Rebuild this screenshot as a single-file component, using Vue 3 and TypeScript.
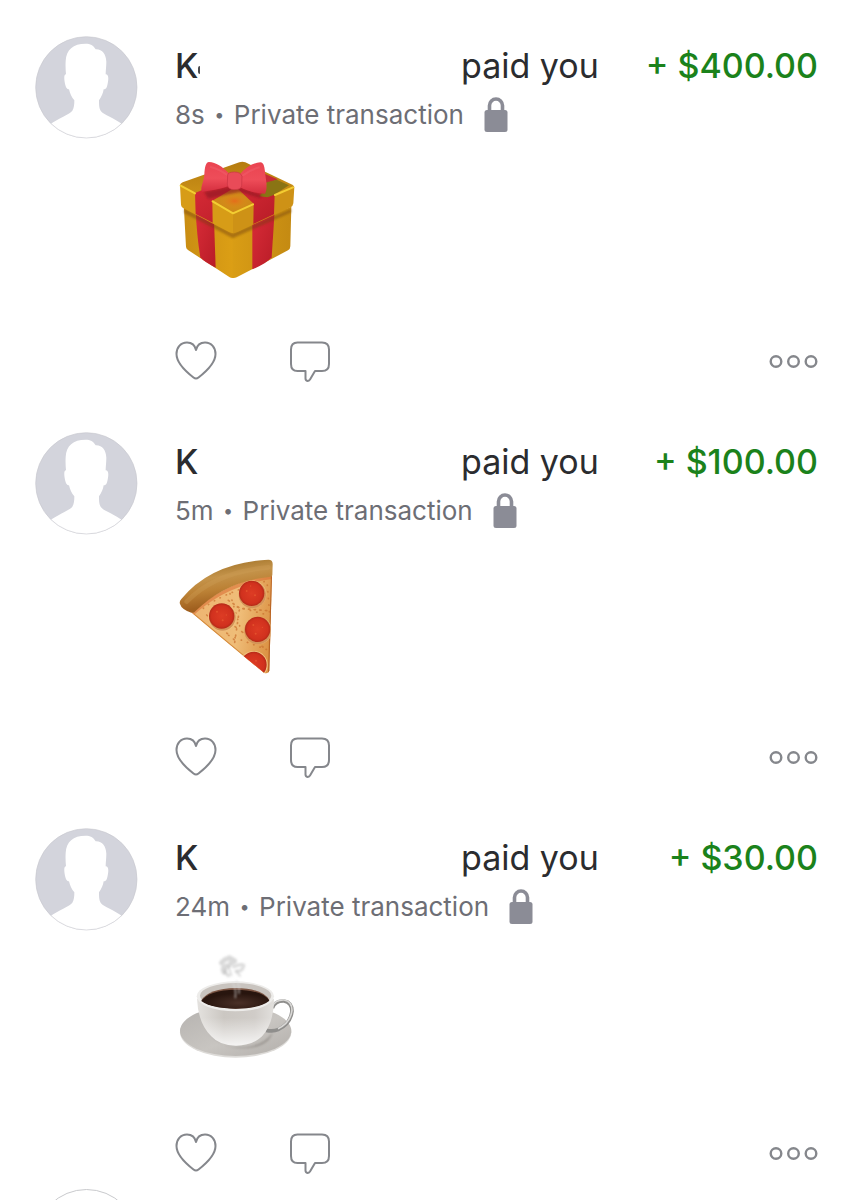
<script setup lang="ts">
type Art = 'gift' | 'pizza' | 'coffee'

interface Payment {
  id: number
  name: string
  masked: boolean
  age: string
  amount: string
  art: Art
}

const payments: Payment[] = [
  { id: 1, name: 'K', masked: true, age: '8s', amount: '+ $400.00', art: 'gift' },
  { id: 2, name: 'K', masked: false, age: '5m', amount: '+ $100.00', art: 'pizza' },
  { id: 3, name: 'K', masked: false, age: '24m', amount: '+ $30.00', art: 'coffee' },
]
</script>

<template>
  <main class="feed">
    <article v-for="p in payments" :key="p.id" class="payment">
      <svg class="avatar" viewBox="46 48 309 309" role="img" aria-label="Profile picture">
        <defs>
          <clipPath :id="`face-${p.id}`"><circle cx="200" cy="202" r="152" /></clipPath>
        </defs>
        <circle cx="200" cy="202" r="152" fill="#d3d4dc" />
        <path
          :clip-path="`url(#face-${p.id})`"
          fill="#fff"
          d="M198 71c14 0 23 5 30 17 20-1 31 15 32 37 0 15-2 26-2 38 8 0 9 10 7 22-2 13-4 23-13 23-2 12-6 22-14 33 0 18 1 25 6 33 6 9 42 22 66 40v60H90v-60c24-18 62-32 68-42 5-8 6-18 6-31-9-10-13-21-16-33-8 0-11-10-13-22-2-13-2-22 4-23-1-12-2-24-1-40 2-34 22-52 60-52z"
        />
        <circle cx="200" cy="202" r="152" fill="none" stroke="#c6c7cd" stroke-width="3" stroke-opacity=".6" />
      </svg>

      <div class="content">
        <header class="title">
          <span class="payer"><strong class="name">{{ p.name }}</strong><i v-if="p.masked" class="mask-edge"></i></span>
          <span>paid you</span>
          <span class="amount">{{ p.amount }}</span>
        </header>

        <p class="meta">
          <span>{{ p.age }}</span>
          <span class="dot">•</span>
          <span>Private transaction</span>
          <svg class="lock" viewBox="0 0 24 36" aria-hidden="true">
            <path d="M5.500 16V8.500a6.500 6.500 0 0 1 13 0V16" fill="none" stroke="#8b8c96" stroke-width="3.600" />
            <rect x=".5" y="13" width="23" height="22" rx="2.500" fill="#8b8c96" />
          </svg>
        </p>

        <svg v-if="p.art === 'gift'" class="art" viewBox="45 21 360 378" role="img" aria-label="Gift">
          <defs>
            <linearGradient id="g-left" x1="0" x2="1"><stop offset="0" stop-color="#c98d13" /><stop offset="1" stop-color="#dc9f15" /></linearGradient>
            <linearGradient id="g-right" x1="0" x2="1"><stop offset="0" stop-color="#d99d15" /><stop offset="1" stop-color="#c48a12" /></linearGradient>
            <linearGradient id="g-top" x1="0" y1="0" x2="0" y2="1"><stop offset="0" stop-color="#b57c10" /><stop offset="1" stop-color="#d79c1b" /></linearGradient>
            <linearGradient id="g-red" x1="0" y1="0" x2="1" y2="1"><stop offset="0" stop-color="#d92c38" /><stop offset="1" stop-color="#b81c27" /></linearGradient>
            <linearGradient id="g-bow" x1="0" y1="0" x2="0" y2="1"><stop offset="0" stop-color="#ea4451" /><stop offset=".55" stop-color="#ee4d59" /><stop offset="1" stop-color="#d52f3f" /></linearGradient>
            <radialGradient id="g-glow"><stop offset="0" stop-color="#e56c1b" /><stop offset="1" stop-color="#dc941a" stop-opacity="0" /></radialGradient>
            <filter id="g-soft" x="-20%" y="-20%" width="140%" height="140%"><feGaussianBlur stdDeviation="3" /></filter>
          </defs>
          <path d="M71 160l148 75v149q-5 1-10-2L84 300q-6-4-6-10z" fill="url(#g-left)" />
          <path d="M218 235l176-65-3 119q0 8-7 12l-154 81q-6 3-12 2z" fill="url(#g-right)" />
          <path d="M107 182l55 28 5 143q-36-18-46-31-10-60-14-140z" fill="url(#g-red)" />
          <path d="M277 214l67-31-9 139q-14 18-58 36z" fill="url(#g-red)" />
          <path d="M72 176l85 43 61 31 67-28 109-45v10l-109 48-67 30-61-33-85-43z" fill="#6f3d08" opacity=".45" filter="url(#g-soft)" />
          <path d="M60 105q1-5 8-8L238 37q9-3 18 0l141 67q6 3 6 8L220 192z" fill="url(#g-top)" />
          <path d="M60 105l160 85v60q-7-1-13-4L69 174q-6-4-6-10z" fill="#d79c17" />
          <path d="M219 190l184-79-3 49q-1 8-8 12l-158 73q-8 4-15 5z" fill="#ce9216" />
          <path d="M105 129l110-46 68 34-126 36 1 65-51-26z" fill="url(#g-red)" />
          <path d="M202 110l91-18 51 41-2 60-62 29 1-60z" fill="url(#g-red)" />
          <path d="M157 152l60-35q9-4 18 1l46 43-62 30z" fill="#cf8919" />
          <ellipse cx="224" cy="153" rx="44" ry="24" fill="url(#g-glow)" />
          <path d="M299 65l54 23-32 13z" fill="#c72a37" />
          <path d="M297 139q22-22 23-42l30-8 37 17-44 28-20 8z" fill="#8a7414" />
          <path d="M62 107l43 23M158 154l61 36 60-27M345 135l54-23" fill="none" stroke="#f3cd32" stroke-width="6" stroke-linecap="round" stroke-linejoin="round" />
          <path d="M132 126l71-14 43 2 62 23-8 7-61-18-42 8-52 12z" fill="#8c1823" opacity=".6" filter="url(#g-soft)" />
          <path d="M206 69c-19-19-38-32-59-33-10 0-13 17-14 38-2 22-15 44-6 51 24-4 49-6 79-17z" fill="url(#g-bow)" />
          <path d="M241 71c17-19 38-33 60-34 11 0 13 16 15 37 3 24 7 43-1 57-25 0-50-7-76-20z" fill="url(#g-bow)" />
          <path d="M150 50q29 7 53 26M299 52q-29 7-52 25" fill="none" stroke="#f26570" stroke-width="6" opacity=".4" />
          <path d="M203 75q1-9 20-9t23 13l-1 28q-1 12-23 12-19 0-20-17z" fill="#e94b58" stroke="#c93442" stroke-width="2" />
        </svg>

        <svg v-else-if="p.art === 'pizza'" class="art" viewBox="45 24 360 378" role="img" aria-label="Pizza">
          <defs>
            <linearGradient id="z-crust" x1=".4" y1=".1" x2=".6" y2=".8"><stop offset="0" stop-color="#a97a30" /><stop offset=".3" stop-color="#c4934a" /><stop offset=".6" stop-color="#bc8236" /><stop offset="1" stop-color="#a0601f" /></linearGradient>
            <linearGradient id="z-cheese" x1="0" y1=".3" x2="1" y2=".5"><stop offset="0" stop-color="#eeb471" /><stop offset=".6" stop-color="#efbd78" /><stop offset="1" stop-color="#dc9345" /></linearGradient>
            <radialGradient id="z-pep"><stop offset="0" stop-color="#dd3c24" /><stop offset=".8" stop-color="#d1311e" /><stop offset="1" stop-color="#b52a17" /></radialGradient>
            <clipPath id="z-slice"><path d="M95 203Q202 108 336 88l-8 288q-3 12-15 8Q210 300 95 203z" /></clipPath>
          </defs>
          <path d="M95 203Q202 108 336 88l-8 288q-3 12-15 8Q210 300 95 203z" fill="url(#z-cheese)" />
          <g clip-path="url(#z-slice)">
            <path d="M94 207Q198 112 338 95" fill="none" stroke="#d86a30" stroke-width="14" opacity=".55" />
            <path d="M336 94l-9 290" stroke="#b86324" stroke-width="6" />
            <path d="M102 208l217 181" stroke="#d48a3c" stroke-width="4" />
            <g fill="none" stroke="#c9712f" stroke-width="5" stroke-linecap="round" stroke-dasharray="1 19" opacity=".7">
              <path d="M130 190Q185 145 320 108" /><path d="M140 210l100 90" stroke-dasharray="3 24" />
              <path d="M205 166l35 24 92 8" stroke-dasharray="4 13" /><path d="M232 186l95 25" />
              <path d="M206 271l120 45" /><path d="M225 245l95 69" stroke-dasharray="4 21" />
              <path d="M210 146l30 100" /><path d="M238 195l-15 105" stroke-dasharray="3 16" /><path d="M322 120l7 90" />
            </g>
            <g fill="#f1c583"><circle cx="187" cy="217" r="42" /><circle cx="277" cy="148" r="42" /><circle cx="295" cy="257" r="41" /><circle cx="281" cy="360" r="42" /></g>
            <g fill="#a84a18" opacity=".4"><circle cx="187" cy="217" r="40" /><circle cx="277" cy="149" r="41" /><circle cx="294" cy="257" r="41" /></g>
            <g fill="url(#z-pep)"><circle cx="185" cy="213" r="38" /><circle cx="275" cy="145" r="38" /><circle cx="293" cy="253" r="38" /><circle cx="281" cy="359" r="39" /></g>
            <g fill="#f06a38" opacity=".5"><circle cx="171" cy="200" r="3" /><circle cx="188" cy="226" r="3" /><circle cx="199" cy="210" r="2" /><circle cx="260" cy="138" r="3" /><circle cx="285" cy="151" r="3" /><circle cx="272" cy="123" r="2" /><circle cx="287" cy="266" r="3" /><circle cx="280" cy="240" r="3" /><circle cx="307" cy="247" r="2" /><circle cx="288" cy="347" r="3" /></g>
          </g>
          <path d="M60 177q-3-8 4-15Q153 53 325 44q14 0 13 15l-1 32q-2 5-9 5-130 12-222 103-5 6-12 4-29-9-34-26z" fill="url(#z-crust)" />
          <path d="M80 170Q165 82 325 67" fill="none" stroke="#cf9f55" stroke-width="14" stroke-linecap="round" opacity=".35" />
        </svg>

        <svg v-else class="art" viewBox="45 30 360 378" role="img" aria-label="Coffee">
          <defs>
            <linearGradient id="c-plate" x1="0" y1="0" x2="1" y2="1"><stop offset="0" stop-color="#b5b2af" /><stop offset=".55" stop-color="#c8c5c1" /><stop offset="1" stop-color="#b2aeaa" /></linearGradient>
            <linearGradient id="c-cup" x1="0" x2="1"><stop offset="0" stop-color="#e4e2df" /><stop offset=".35" stop-color="#cbc7c2" /><stop offset=".75" stop-color="#d0ccc8" /><stop offset="1" stop-color="#e2e0dd" /></linearGradient>
            <linearGradient id="c-shine" x1="0" y1="0" x2="0" y2="1"><stop offset=".4" stop-color="#fff" stop-opacity="0" /><stop offset="1" stop-color="#fff" stop-opacity=".8" /></linearGradient>
            <radialGradient id="c-drink" cx=".55" cy=".7"><stop offset="0" stop-color="#4a3027" /><stop offset="1" stop-color="#28150e" /></radialGradient>
            <filter id="c-soft" x="-20%" y="-20%" width="140%" height="140%"><feGaussianBlur stdDeviation="3" /></filter>
          </defs>
          <ellipse cx="227" cy="280" rx="167" ry="76" fill="#dddbd8" />
          <ellipse cx="227" cy="276" rx="167" ry="75" fill="url(#c-plate)" />
          <path d="M145 275q28 50 95 50 70 0 98-45-8 34-54 44-94 18-139-49z" fill="#77716c" opacity=".5" filter="url(#c-soft)" />
          <path d="M337 207q8-22 35-21 24 4 24 31-5 38-42 55-13 6-36 2" fill="none" stroke="#8f8e8c" stroke-width="11" />
          <path d="M337 203q8-21 35-20 24 4 24 31-5 38-42 55" fill="none" stroke="#d9d8d6" stroke-width="5" />
          <path d="M111 180q3 72 43 112 25 28 74 28t78-28q36-40 36-112z" fill="url(#c-cup)" />
          <path d="M111 180q3 72 43 112 25 28 74 28t78-28q36-40 36-112z" fill="url(#c-shine)" />
          <ellipse cx="226" cy="172" rx="116" ry="45" fill="#edecea" />
          <ellipse cx="227" cy="170" rx="107" ry="38" fill="#c9c4bf" />
          <path d="M124 184q23-36 103-37 80 1 101 36-29 25-101 26-74-2-103-25z" fill="#7c5543" />
          <path d="M124 186q23-33 103-34 80 1 101 33-29 24-101 24-74-1-103-23z" fill="url(#c-drink)" />
          <g fill="none" stroke="#aaa" stroke-linecap="round" filter="url(#c-soft)">
            <path d="M226 176q3-31-8-45M237 163q2-25-8-38" stroke="#ddd" stroke-width="4" opacity=".7" />
            <path d="M184 72q14-18 30-12t8 8-16 12q-24 2-14 20M208 56q19 9 4 17" stroke-width="14" opacity=".45" />
            <path d="M221 83q23-10 30-4-4 20-19 17M198 92q-7 8 8 18" stroke-width="10" opacity=".4" />
            <path d="M226 96l14 14M206 84l8 24" stroke-width="7" opacity=".35" />
          </g>
        </svg>

        <footer class="actions">
          <button type="button" class="icon-button" aria-label="Like">
            <svg class="heart" viewBox="0 0 42 42" aria-hidden="true">
              <path d="M21 10C20 5.500 16.500 2.500 12 2.500 5.500 2.500 1.500 7.500 1.500 14c0 9 8 16.500 17 23.500q2.500 2 5 0c9-7 17-14.500 17-23.500 0-6.500-4-11.500-10.500-11.500-4.500 0-8 3-9 7.500z" />
            </svg>
          </button>
          <button type="button" class="icon-button" aria-label="Comment">
            <svg class="bubble" viewBox="0 0 42 42" aria-hidden="true">
              <path d="M8.500 2.500h24.500q7 0 7 7v14.500q0 7-7 7h-7l-5 8.500q-1 1.500-2.500 1.500-2-.5-2-2.500v-7.500H8.500q-6.500 0-6.500-7v-14.500q0-7 6.500-7z" />
            </svg>
          </button>
          <button type="button" class="icon-button more" aria-label="More options">
            <svg class="dots" viewBox="0 0 50 42" aria-hidden="true">
              <circle cx="8" cy="21.500" r="5.300" /><circle cx="25.500" cy="21.500" r="5.300" /><circle cx="43" cy="21.500" r="5.300" />
            </svg>
          </button>
        </footer>
      </div>
    </article>
    <div class="next-avatar"></div>
  </main>
</template>

<style>
body {
  margin: 0;
  background: #fff;
}
</style>

<style scoped>
.feed {
  box-sizing: border-box;
  height: 100vh;
  overflow: hidden;
  padding: 36px 35px 0;
  background: #fff;
  color: #2b2c2f;
  font-family: Inter, "Liberation Sans", sans-serif;
}
.payment {
  display: grid;
  grid-template-columns: 103px 1fr;
  column-gap: 37px;
  padding-bottom: 50px;
}
.payment:nth-child(3) {
  padding-bottom: 15px;
}
.avatar {
  display: block;
  width: 103px;
  height: 103px;
}
.content {
  padding-top: 8px;
  min-width: 0;
}
.title {
  display: grid;
  grid-template-columns: 286px 1fr auto;
  font-size: 34px;
  line-height: 44px;
  white-space: nowrap;
}
.payer {
  display: flex;
  align-items: center;
}
.name {
  font-weight: 500;
}
.mask-edge {
  width: 2px;
  height: 8px;
  margin-top: 8px;
  border-radius: 2px 0 0 2px;
  background: #4a4b4e;
}
.amount {
  color: #1b821b;
  font-weight: 500;
}
.meta {
  display: flex;
  align-items: center;
  margin: 9px 0 24px;
  font-size: 26px;
  line-height: 36px;
  color: #6d6e75;
  white-space: nowrap;
}
.dot {
  width: 29px;
  font-size: 18px;
  text-align: center;
}
.lock {
  width: 24px;
  height: 36px;
  margin-left: 20px;
}
.art {
  display: block;
  width: 120px;
  height: 126px;
}
.actions {
  display: flex;
  gap: 72px;
  margin-top: 57px;
}
.icon-button {
  display: block;
  padding: 0;
  border: 0;
  background: none;
  line-height: 0;
  cursor: pointer;
}
.icon-button svg {
  height: 42px;
  fill: none;
  stroke: #85878c;
  stroke-width: 2;
  stroke-linejoin: round;
}
.heart,
.bubble {
  width: 42px;
}
.more {
  margin-left: auto;
}
.icon-button .dots {
  width: 50px;
  stroke-width: 2.4;
}
.next-avatar {
  box-sizing: border-box;
  width: 103px;
  height: 103px;
  border: 1px solid #c9cacd;
  border-radius: 50%;
}
</style>
